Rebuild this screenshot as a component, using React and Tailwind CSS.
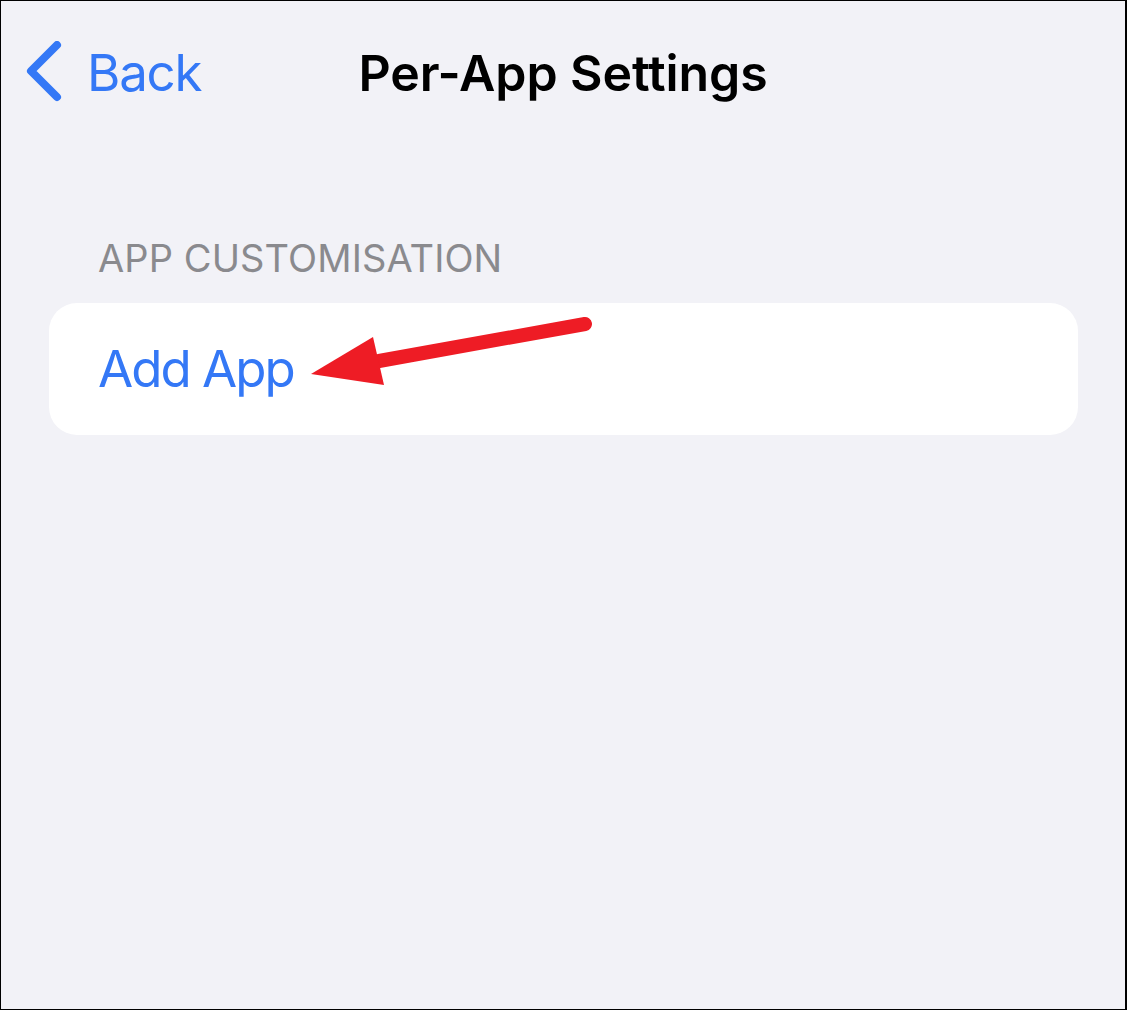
import React from "react";

function Chevron() {
  return (
    <svg width="40" height="62" viewBox="0 0 40 62" className="shrink-0">
      <path
        d="M32 4 L6 30 L32 56"
        fill="none"
        stroke="#3478f6"
        strokeWidth="8"
        strokeLinecap="round"
        strokeLinejoin="round"
      />
    </svg>
  );
}

function Arrow() {
  return (
    <svg
      className="absolute left-0 top-0 pointer-events-none"
      width="1127"
      height="1010"
      viewBox="0 0 1127 1010"
    >
      <line x1="378" y1="360" x2="584" y2="323" stroke="#ee1c25" strokeWidth="14" strokeLinecap="round" />
      <polygon points="310,373 372,336 383,384" fill="#ee1c25" />
    </svg>
  );
}

export default function App() {
  return (
    <div
      className="relative w-[1127px] h-[1010px] bg-[#f2f2f7] border border-r-2 border-black overflow-hidden"
      style={{ fontFamily: "Inter, 'Noto Sans', sans-serif" }}
    >
      <div className="relative h-[142px]">
        <div className="absolute left-[24px] top-[40px] flex items-center gap-[22px]">
          <Chevron />
          <span className="text-[51px] leading-none text-[#3478f6] tracking-[-1.2px]">Back</span>
        </div>
        <h1 className="w-full text-center text-[50px] font-semibold text-black leading-none tracking-[-0.1px] pt-[47px]">
          Per-App Settings
        </h1>
      </div>

      <div className="pl-[97px] pt-[96px] text-[38px] leading-none text-[#8a8a8e] tracking-[0.1px]">
        APP CUSTOMISATION
      </div>

      <div className="ml-[48px] mt-[26px] w-[1029px] h-[132px] bg-white rounded-[28px] flex items-center pl-[49px]">
        <span className="text-[51px] leading-none text-[#3478f6] tracking-[-2px] -mt-[2px]">Add App</span>
      </div>

      <Arrow />
    </div>
  );
}
